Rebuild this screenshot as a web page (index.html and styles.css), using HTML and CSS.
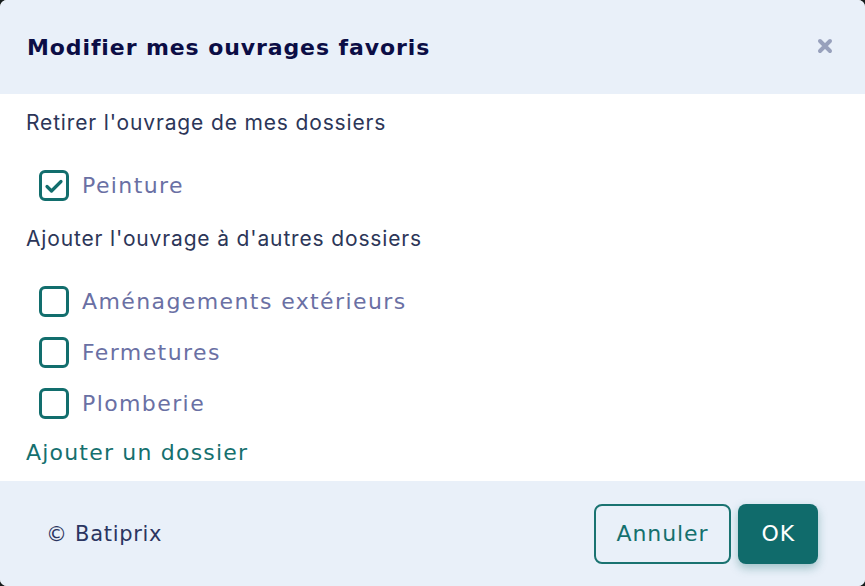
FILE: index.html
```html
<html><head>
  <title>Modifier mes ouvrages favoris</title>
  <link rel="stylesheet" href="styles.css">
</head>
<body>
  <div class="dialog">
    <div class="dialog-header">
      <h2 class="dialog-title">Modifier mes ouvrages favoris</h2>
      <svg class="close-btn" viewBox="0 0 16 16" width="16" height="16"><path d="M3 3l10 10M13 3L3 13" stroke="#98a1bc" stroke-width="4" stroke-linecap="round"/></svg>
    </div>

    <div class="dialog-body">
      <div class="section-title">Retirer l'ouvrage de mes dossiers</div>
      <div class="options">
        <label class="option">
          <span class="box">
            <svg viewBox="0 0 24 24" width="24" height="24"><path d="M5 12.5l4.5 4.5 9.5-9.5" fill="none" stroke="#126e6d" stroke-width="3.2" stroke-linecap="round" stroke-linejoin="round"/></svg>
          </span>
          Peinture
        </label>
      </div>

      <div class="section-title">Ajouter l'ouvrage à d'autres dossiers</div>
      <div class="options">
        <label class="option"><span class="box"></span>Aménagements extérieurs</label>
        <label class="option"><span class="box"></span>Fermetures</label>
        <label class="option"><span class="box"></span>Plomberie</label>
      </div>

      <a class="add-link">Ajouter un dossier</a>
    </div>

    <div class="dialog-footer">
      <span class="copyright">© Batiprix</span>
      <div class="actions">
        <button class="btn btn-outline">Annuler</button>
        <button class="btn btn-primary">OK</button>
      </div>
    </div>
  </div>
</body></html>
```

FILE: styles.css
```css
body {
  margin: 0;
  background-color: #161c1c;
  font-family: "DejaVu Sans", sans-serif;
}

.dialog {
  width: 865px;
  height: 586px;
  display: flex;
  flex-direction: column;
  border-radius: 7px;
  overflow: hidden;
  background-color: #ffffff;
}

.dialog-header {
  height: 94px;
  flex: 0 0 94px;
  display: flex;
  align-items: center;
  justify-content: space-between;
  padding: 0 32px 0 27px;
  background-color: #e9f0f9;
}

.dialog-title {
  margin: 0;
  font-size: 22px;
  font-weight: 700;
  color: #0b0d45;
  letter-spacing: 0.9px;
}

.close-btn {
  margin-top: -2px;
}

.dialog-body {
  flex: 1;
  padding: 14px 26px 0 26px;
}

.section-title {
  font-family: Inter, sans-serif;
  font-size: 21px;
  line-height: 30px;
  letter-spacing: 0.85px;
  color: #2c3658;
}

.options {
  margin: 22px 0 13px 0;
}

.option {
  display: flex;
  align-items: center;
  height: 51px;
  padding-left: 13px;
  font-size: 22px;
  letter-spacing: 1.4px;
  color: #6a70a4;
}

.box {
  box-sizing: border-box;
  width: 30px;
  height: 31px;
  margin-right: 13px;
  border: 3px solid #126e6d;
  border-radius: 6px;
  display: flex;
  align-items: center;
  justify-content: center;
}

.add-link {
  display: block;
  margin-top: -4px;
  font-size: 22px;
  line-height: 30px;
  letter-spacing: 1.2px;
  color: #15706e;
}

.dialog-footer {
  height: 105px;
  flex: 0 0 105px;
  display: flex;
  align-items: center;
  justify-content: space-between;
  padding: 0 47px 0 46px;
  background-color: #e9f0f9;
}

.copyright {
  font-size: 21px;
  letter-spacing: 0.7px;
  color: #2b3561;
}

.actions {
  display: flex;
  gap: 7px;
}

.btn {
  height: 60px;
  font-family: "DejaVu Sans", sans-serif;
  font-size: 22px;
  letter-spacing: 0.9px;
  border-radius: 8px;
}

.btn-outline {
  padding: 0 21px;
  background-color: transparent;
  border: 2px solid #1a7371;
  color: #15706e;
}

.btn-primary {
  padding: 0 23px;
  background-color: #106b6b;
  border: none;
  color: #ffffff;
  box-shadow: 0 4px 10px rgba(16, 107, 107, 0.35);
}
```
